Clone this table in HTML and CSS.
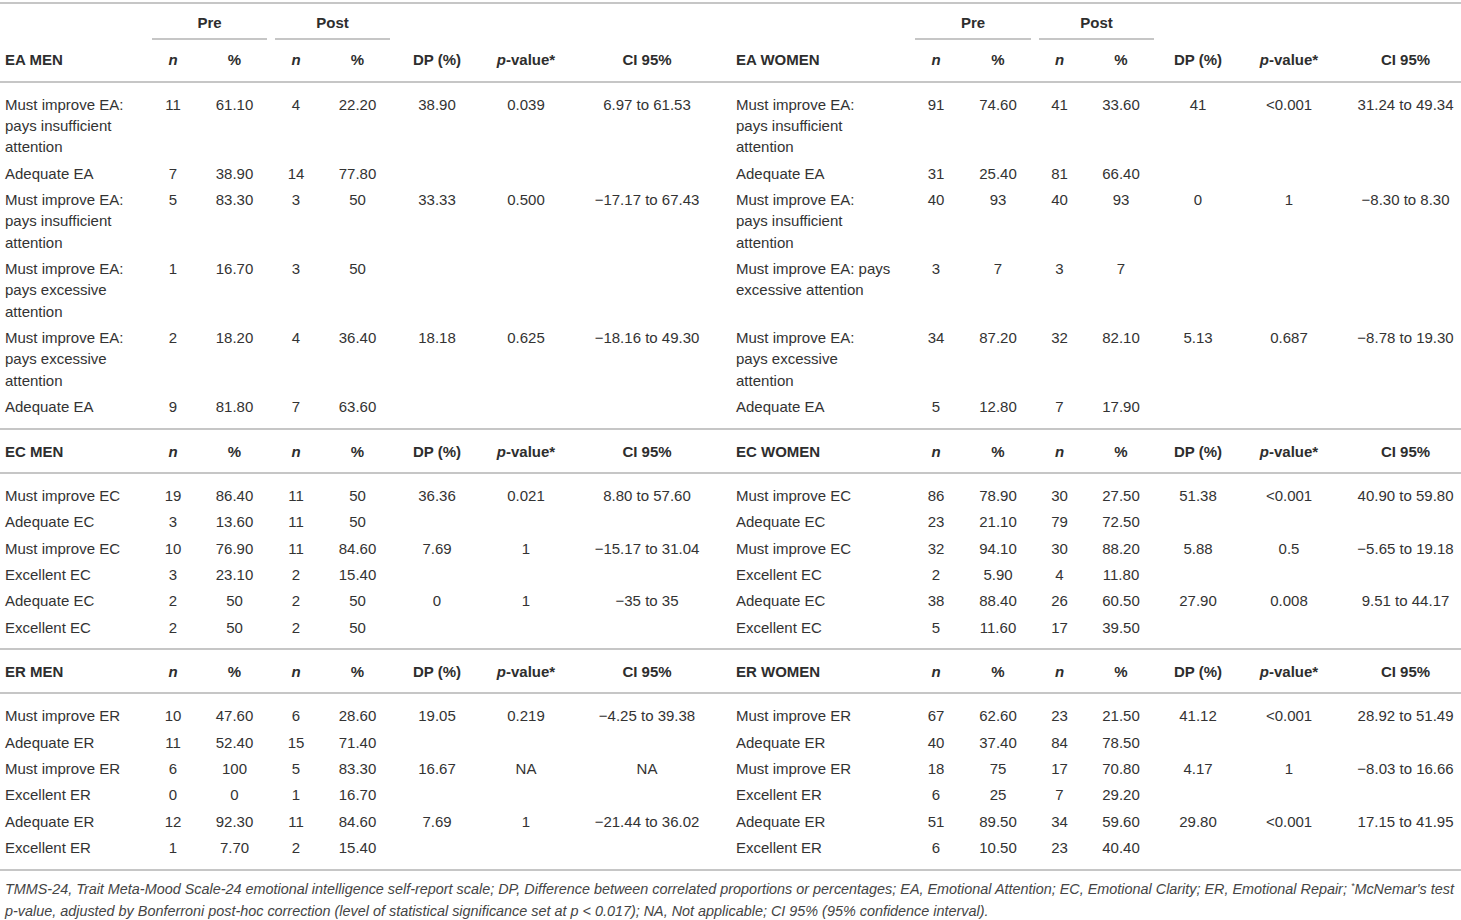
FILE: index.html
```html
<!DOCTYPE html>
<html lang="en">
<head>
<meta charset="utf-8">
<title>Table</title>
<link rel="stylesheet" href="styles.css">
</head>
<body>
<table class="tbl">
  <colgroup>
    <col class="w148"><col class="w50"><col class="w73"><col class="w50"><col class="w73"><col class="w86"><col class="w92"><col class="w150">
    <col class="w189"><col class="w50"><col class="w74"><col class="w49"><col class="w74"><col class="w80"><col class="w102"><col class="w121">
  </colgroup>
  <thead>
    <tr class="grp">
      <th></th><th colspan="2"><div class="span">Pre</div></th><th colspan="2"><div class="span">Post</div></th><th></th><th></th><th></th>
      <th></th><th colspan="2"><div class="span">Pre</div></th><th colspan="2"><div class="span">Post</div></th><th></th><th></th><th></th>
    </tr>
    <tr class="hdr">
      <th class="lab">EA MEN</th><th><i>n</i></th><th>%</th><th><i>n</i></th><th>%</th><th>DP (%)</th><th><i>p</i>-value*</th><th>CI 95%</th>
      <th class="lab labr">EA WOMEN</th><th><i>n</i></th><th>%</th><th><i>n</i></th><th>%</th><th>DP (%)</th><th><i>p</i>-value*</th><th class="cir">CI 95%</th>
    </tr>
  </thead>
  <tbody>
    <tr class="first">
      <td class="lab">Must improve EA:<br>pays insufficient<br>attention</td><td>11</td><td>61.10</td><td>4</td><td>22.20</td><td>38.90</td><td>0.039</td><td>6.97 to 61.53</td>
      <td class="lab labr">Must improve EA:<br>pays insufficient<br>attention</td><td>91</td><td>74.60</td><td>41</td><td>33.60</td><td>41</td><td>&lt;0.001</td><td class="cir">31.24 to 49.34</td>
    </tr>
    <tr>
      <td class="lab">Adequate EA</td><td>7</td><td>38.90</td><td>14</td><td>77.80</td><td></td><td></td><td></td>
      <td class="lab labr">Adequate EA</td><td>31</td><td>25.40</td><td>81</td><td>66.40</td><td></td><td></td><td class="cir"></td>
    </tr>
    <tr>
      <td class="lab">Must improve EA:<br>pays insufficient<br>attention</td><td>5</td><td>83.30</td><td>3</td><td>50</td><td>33.33</td><td>0.500</td><td>−17.17 to 67.43</td>
      <td class="lab labr">Must improve EA:<br>pays insufficient<br>attention</td><td>40</td><td>93</td><td>40</td><td>93</td><td>0</td><td>1</td><td class="cir">−8.30 to 8.30</td>
    </tr>
    <tr>
      <td class="lab">Must improve EA:<br>pays excessive<br>attention</td><td>1</td><td>16.70</td><td>3</td><td>50</td><td></td><td></td><td></td>
      <td class="lab labr">Must improve EA: pays<br>excessive attention</td><td>3</td><td>7</td><td>3</td><td>7</td><td></td><td></td><td class="cir"></td>
    </tr>
    <tr>
      <td class="lab">Must improve EA:<br>pays excessive<br>attention</td><td>2</td><td>18.20</td><td>4</td><td>36.40</td><td>18.18</td><td>0.625</td><td>−18.16 to 49.30</td>
      <td class="lab labr">Must improve EA:<br>pays excessive<br>attention</td><td>34</td><td>87.20</td><td>32</td><td>82.10</td><td>5.13</td><td>0.687</td><td class="cir">−8.78 to 19.30</td>
    </tr>
    <tr class="last">
      <td class="lab">Adequate EA</td><td>9</td><td>81.80</td><td>7</td><td>63.60</td><td></td><td></td><td></td>
      <td class="lab labr">Adequate EA</td><td>5</td><td>12.80</td><td>7</td><td>17.90</td><td></td><td></td><td class="cir"></td>
    </tr>
  </tbody>
  <tbody>
    <tr class="sec">
      <th class="lab">EC MEN</th><th><i>n</i></th><th>%</th><th><i>n</i></th><th>%</th><th>DP (%)</th><th><i>p</i>-value*</th><th>CI 95%</th>
      <th class="lab labr">EC WOMEN</th><th><i>n</i></th><th>%</th><th><i>n</i></th><th>%</th><th>DP (%)</th><th><i>p</i>-value*</th><th class="cir">CI 95%</th>
    </tr>
    <tr class="first">
      <td class="lab">Must improve EC</td><td>19</td><td>86.40</td><td>11</td><td>50</td><td>36.36</td><td>0.021</td><td>8.80 to 57.60</td>
      <td class="lab labr">Must improve EC</td><td>86</td><td>78.90</td><td>30</td><td>27.50</td><td>51.38</td><td>&lt;0.001</td><td class="cir">40.90 to 59.80</td>
    </tr>
    <tr>
      <td class="lab">Adequate EC</td><td>3</td><td>13.60</td><td>11</td><td>50</td><td></td><td></td><td></td>
      <td class="lab labr">Adequate EC</td><td>23</td><td>21.10</td><td>79</td><td>72.50</td><td></td><td></td><td class="cir"></td>
    </tr>
    <tr>
      <td class="lab">Must improve EC</td><td>10</td><td>76.90</td><td>11</td><td>84.60</td><td>7.69</td><td>1</td><td>−15.17 to 31.04</td>
      <td class="lab labr">Must improve EC</td><td>32</td><td>94.10</td><td>30</td><td>88.20</td><td>5.88</td><td>0.5</td><td class="cir">−5.65 to 19.18</td>
    </tr>
    <tr>
      <td class="lab">Excellent EC</td><td>3</td><td>23.10</td><td>2</td><td>15.40</td><td></td><td></td><td></td>
      <td class="lab labr">Excellent EC</td><td>2</td><td>5.90</td><td>4</td><td>11.80</td><td></td><td></td><td class="cir"></td>
    </tr>
    <tr>
      <td class="lab">Adequate EC</td><td>2</td><td>50</td><td>2</td><td>50</td><td>0</td><td>1</td><td>−35 to 35</td>
      <td class="lab labr">Adequate EC</td><td>38</td><td>88.40</td><td>26</td><td>60.50</td><td>27.90</td><td>0.008</td><td class="cir">9.51 to 44.17</td>
    </tr>
    <tr class="last">
      <td class="lab">Excellent EC</td><td>2</td><td>50</td><td>2</td><td>50</td><td></td><td></td><td></td>
      <td class="lab labr">Excellent EC</td><td>5</td><td>11.60</td><td>17</td><td>39.50</td><td></td><td></td><td class="cir"></td>
    </tr>
  </tbody>
  <tbody>
    <tr class="sec">
      <th class="lab">ER MEN</th><th><i>n</i></th><th>%</th><th><i>n</i></th><th>%</th><th>DP (%)</th><th><i>p</i>-value*</th><th>CI 95%</th>
      <th class="lab labr">ER WOMEN</th><th><i>n</i></th><th>%</th><th><i>n</i></th><th>%</th><th>DP (%)</th><th><i>p</i>-value*</th><th class="cir">CI 95%</th>
    </tr>
    <tr class="first">
      <td class="lab">Must improve ER</td><td>10</td><td>47.60</td><td>6</td><td>28.60</td><td>19.05</td><td>0.219</td><td>−4.25 to 39.38</td>
      <td class="lab labr">Must improve ER</td><td>67</td><td>62.60</td><td>23</td><td>21.50</td><td>41.12</td><td>&lt;0.001</td><td class="cir">28.92 to 51.49</td>
    </tr>
    <tr>
      <td class="lab">Adequate ER</td><td>11</td><td>52.40</td><td>15</td><td>71.40</td><td></td><td></td><td></td>
      <td class="lab labr">Adequate ER</td><td>40</td><td>37.40</td><td>84</td><td>78.50</td><td></td><td></td><td class="cir"></td>
    </tr>
    <tr>
      <td class="lab">Must improve ER</td><td>6</td><td>100</td><td>5</td><td>83.30</td><td>16.67</td><td>NA</td><td>NA</td>
      <td class="lab labr">Must improve ER</td><td>18</td><td>75</td><td>17</td><td>70.80</td><td>4.17</td><td>1</td><td class="cir">−8.03 to 16.66</td>
    </tr>
    <tr>
      <td class="lab">Excellent ER</td><td>0</td><td>0</td><td>1</td><td>16.70</td><td></td><td></td><td></td>
      <td class="lab labr">Excellent ER</td><td>6</td><td>25</td><td>7</td><td>29.20</td><td></td><td></td><td class="cir"></td>
    </tr>
    <tr>
      <td class="lab">Adequate ER</td><td>12</td><td>92.30</td><td>11</td><td>84.60</td><td>7.69</td><td>1</td><td>−21.44 to 36.02</td>
      <td class="lab labr">Adequate ER</td><td>51</td><td>89.50</td><td>34</td><td>59.60</td><td>29.80</td><td>&lt;0.001</td><td class="cir">17.15 to 41.95</td>
    </tr>
    <tr class="last">
      <td class="lab">Excellent ER</td><td>1</td><td>7.70</td><td>2</td><td>15.40</td><td></td><td></td><td></td>
      <td class="lab labr">Excellent ER</td><td>6</td><td>10.50</td><td>23</td><td>40.40</td><td></td><td></td><td class="cir"></td>
    </tr>
  </tbody>
</table>
<p class="note">TMMS-24, Trait Meta-Mood Scale-24 emotional intelligence self-report scale; DP, Difference between correlated proportions or percentages; EA, Emotional Attention; EC, Emotional Clarity; ER, Emotional Repair; <sup class="ast">*</sup>McNemar's test<br>p-value, adjusted by Bonferroni post-hoc correction (level of statistical significance set at p &lt; 0.017); NA, Not applicable; CI 95% (95% confidence interval).</p>
</body>
</html>
```

FILE: styles.css
```css
html, body {
  margin: 0;
  padding: 0;
  background: #ffffff;
}

body {
  font-family: "Liberation Sans", Arial, Helvetica, sans-serif;
  color: #333333;
}

.tbl {
  width: 1461px;
  border-collapse: collapse;
  table-layout: fixed;
  font-size: 15px;
  line-height: 21.35px;
  margin-top: 2px;
  border-top: 2px solid #c6c6c6;
  border-bottom: 2px solid #c6c6c6;
}

.w148 { width: 148px; }
.w50 { width: 50px; }
.w73 { width: 73px; }
.w86 { width: 86px; }
.w92 { width: 92px; }
.w150 { width: 150px; }
.w189 { width: 189px; }
.w74 { width: 74px; }
.w49 { width: 49px; }
.w80 { width: 80px; }
.w102 { width: 102px; }
.w121 { width: 121px; }

.tbl th,
.tbl td {
  padding: 2.5px 0;
  text-align: center;
  vertical-align: top;
  font-weight: normal;
}

.tbl th {
  font-weight: bold;
  color: #2e2e2e;
}

.tbl .lab {
  text-align: left;
  padding-left: 5px;
  padding-right: 5px;
}

.tbl .labr {
  padding-left: 14px;
}

.tbl .cir {
  padding-left: 10px;
}

.grp th {
  padding-top: 8px;
  padding-bottom: 0;
}

.grp .span {
  margin: 0 4px 0 4px;
  padding-bottom: 5px;
  border-bottom: 2px solid #c6c6c6;
}

.hdr th {
  padding-top: 8.5px;
  padding-bottom: 10.5px;
  border-bottom: 2px solid #c6c6c6;
}

.sec th {
  padding-top: 10.5px;
  padding-bottom: 10px;
  border-top: 2px solid #c6c6c6;
  border-bottom: 2px solid #c6c6c6;
}

tr.first td {
  padding-top: 11px;
}

tr.last td {
  padding-bottom: 10.5px;
}

.note {
  margin: 7.5px 0 0 5px;
  font-style: italic;
  font-size: 14.4px;
  line-height: 22px;
  color: #444444;
}

.note .ast {
  font-size: 9px;
  line-height: 0;
  vertical-align: 5px;
}
```
